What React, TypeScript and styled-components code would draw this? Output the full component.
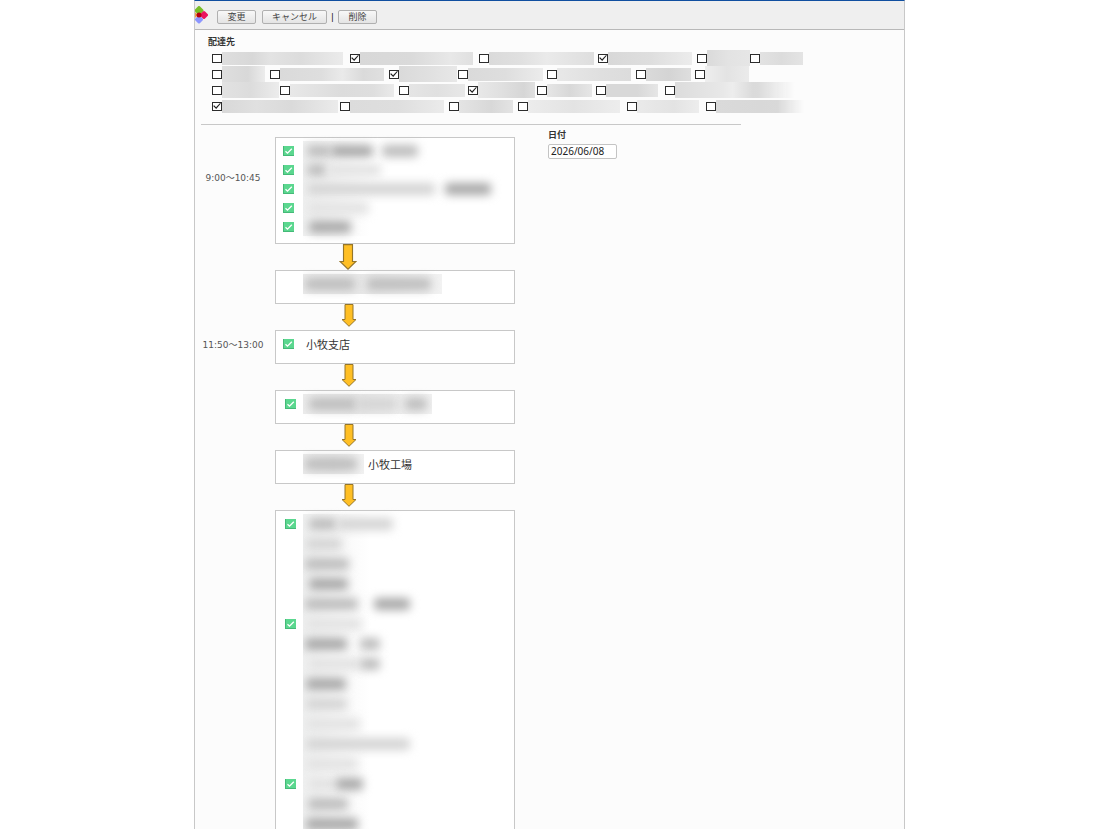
import React from "react";
import styled, { createGlobalStyle } from "styled-components";

const Global = createGlobalStyle`
  * { box-sizing: border-box; }
  body {
    margin: 0;
    background: #fff;
    color: #222;
    font-family: "Noto Sans", "Noto Sans CJK JP", sans-serif;
    font-size: 9px;
  }
`;

const Shell = styled.div`
  display: grid;
  grid-template-columns: minmax(0, 194fr) minmax(0, 711fr) minmax(0, 195fr);
  height: 100vh;
  overflow: hidden;
`;

const Page = styled.div`
  grid-column: 2;
  border: 1px solid #c8c8c8;
  border-top-color: #104fa0;
  border-bottom: 0;
  background: #fcfcfc;
`;

const Toolbar = styled.header`
  display: flex;
  align-items: center;
  height: 29px;
  padding-top: 4px;
  background: #efefef;
  border-bottom: 1px solid #b8b8b8;
`;

const Logo = styled.svg`
  display: block;
  width: 13px;
  height: 18px;
  margin: 0 9px 4px 0;
`;

const Button = styled.button<{ $wide?: boolean }>`
  width: ${(p) => (p.$wide ? 65 : 39)}px;
  height: 14px;
  padding: 0;
  border: 1px solid #b0b0b0;
  border-radius: 2px;
  background: linear-gradient(#f8f8f8, #e4e4e4);
  color: #444;
  font: 9px/10px "Noto Sans CJK JP", sans-serif;
  & + & { margin-left: 6px; }
`;

const Divider = styled.span`
  width: 11px;
  text-align: center;
  font: 9px/12px "Liberation Sans", sans-serif;
  color: #111;
`;

const Destinations = styled.fieldset`
  margin: 0;
  padding: 6px 0 0 17px;
  border: 0;
  min-width: 0;
`;

const Heading = styled.div`
  font: bold 9px/12px "Noto Sans CJK JP", sans-serif;
  color: #333;
`;

const DestinationHeading = styled(Heading)`
  margin: 0 0 2px -4px;
`;

const DestinationRow = styled.div`
  display: flex;
  align-items: center;
  height: 16px;
`;

const Destination = styled.label<{ $pitch: number }>`
  display: flex;
  flex: none;
  align-items: center;
  width: ${(p) => p.$pitch}px;
  height: 16px;
`;

const Tick = styled.input`
  appearance: none;
  flex: none;
  width: 10px;
  height: 9px;
  margin: 0;
  border: 1px solid #2c2c2c;
  background: #fff;
  &:checked::after {
    content: "";
    display: block;
    width: 8px;
    height: 7px;
    background: #222;
    clip-path: polygon(2% 50%, 14% 40%, 38% 68%, 88% 6%, 98% 16%, 40% 92%);
  }
`;

const Mask = styled.span<{ $w: number; $tones: string; $tall?: boolean; $fade?: boolean }>`
  flex: none;
  width: ${(p) => p.$w}px;
  height: ${(p) => (p.$tall ? 16 : 13)}px;
  background: linear-gradient(90deg, ${(p) => p.$tones});
  mask-image: ${(p) => (p.$fade ? "linear-gradient(90deg, #000 70%, transparent)" : "none")};
`;

const Rule = styled.hr`
  max-width: 540px;
  height: 1px;
  margin: 10px 0 0 6px;
  border: 0;
  background: #c8c8c8;
`;

const Body = styled.main`
  display: flex;
  align-items: flex-start;
`;

const Route = styled.div`
  padding-top: 12px;
`;

const Stop = styled.section`
  display: grid;
  grid-template-columns: 76px 240px;
  column-gap: 4px;
  align-items: start;
`;

const Time = styled.div<{ $top: number }>`
  padding-top: ${(p) => p.$top}px;
  text-align: center;
  white-space: nowrap;
  color: #555;
  font: 9px/20px "DejaVu Sans", "Noto Sans CJK JP", sans-serif;
`;

const Card = styled.div<{ $min: number }>`
  grid-column: 2;
  min-height: ${(p) => p.$min}px;
  padding-top: 3px;
  border: 1px solid #c8c8c8;
  background: #fff;
`;

const Line = styled.div<{ $h: number; $inset: number }>`
  display: grid;
  grid-template-columns: 27px 1fr;
  align-items: center;
  height: ${(p) => p.$h}px;
  > svg { margin-left: ${(p) => p.$inset}px; }
`;

const Content = styled.div<{ $w?: number; $tint: string }>`
  grid-column: 2;
  display: flex;
  align-items: center;
  width: ${(p) => (p.$w ? p.$w + "px" : "auto")};
  height: 100%;
  overflow-x: clip;
  background: ${(p) => p.$tint};
`;

const Smudge = styled.span<{ $w: number; $gap?: number; $tone: string }>`
  flex: none;
  width: ${(p) => p.$w}px;
  height: 12px;
  margin-left: ${(p) => p.$gap ?? 0}px;
  border-radius: 4px;
  background: ${(p) => p.$tone};
  filter: blur(5px);
`;

const Name = styled.span`
  padding-left: 3px;
  font: 11px/20px "Noto Sans CJK JP", sans-serif;
  color: #333;
`;

const NamedContent = styled.div`
  display: flex;
  gap: 1px;
  height: 100%;
`;

const ArrowSlot = styled.div<{ $large?: boolean }>`
  height: 26px;
  padding-left: ${(p) => (p.$large ? 144 : 146)}px;
  > svg { display: block; }
`;

const DateField = styled.label`
  display: block;
  margin-left: 33px;
  padding-top: 3px;
`;

const DateInput = styled.input`
  display: block;
  width: 69px;
  height: 15px;
  margin-top: 3px;
  padding: 0 2px 2px;
  border: 1px solid #c4c4c4;
  border-radius: 2px;
  background: #fff;
  color: #222;
  font: 10px/11px "Noto Sans", sans-serif;
`;

type Choice = { pitch: number; w: number; tones: string; on?: boolean; tall?: boolean; fade?: boolean };

const choices: Choice[][] = [
  [
    { pitch: 138, w: 121, tones: "#dedede, #d8d8d8 25%, #e3e3e3 40%, #dcdcdc 65%, #ebebeb" },
    { pitch: 129, w: 113, tones: "#d8d8d8, #dadada 45%, #e8e8e8 80%, #e0e0e0", on: true },
    { pitch: 119, w: 105, tones: "#dadada, #e0e0e0 30%, #eaeaea 55%, #dedede" },
    { pitch: 99, w: 84, tones: "#d8d8d8, #dedede 50%, #ececec", on: true },
    { pitch: 53, w: 43, tones: "#dadada, #e3e3e3 50%, #e6e6e6", tall: true },
    { pitch: 53, w: 43, tones: "#e2e2e2, #dcdcdc 50%, #e4e4e4" },
  ],
  [
    { pitch: 58, w: 43, tones: "#dedede, #d8d8d8 60%, #ececec", tall: true },
    { pitch: 119, w: 104, tones: "#dadada, #dedede 40%, #eaeaea 60%, #dadada 80%, #e0e0e0" },
    { pitch: 69, w: 58, tones: "#dadada, #e0e0e0 50%, #e8e8e8", on: true, tall: true },
    { pitch: 89, w: 75, tones: "#dadada, #dedede 50%, #ececec" },
    { pitch: 89, w: 74, tones: "#e8e8e8, #dfdfdf 60%, #dcdcdc" },
    { pitch: 59, w: 45, tones: "#dadada, #d4d4d4 50%, #dedede" },
    { pitch: 55, w: 44, tones: "#eeeeee, #e3e3e3 50%, #ebebeb", tall: true },
  ],
  [
    { pitch: 68, w: 57, tones: "#e2e2e2, #dcdcdc 50%, #ececec", tall: true },
    { pitch: 119, w: 104, tones: "#e8e8e8, #dcdcdc 50%, #dedede 80%, #eaeaea" },
    { pitch: 69, w: 56, tones: "#e5e5e5, #e0e0e0 50%, #e8e8e8" },
    { pitch: 69, w: 57, tones: "#e8e8e8, #e0e0e0 40%, #d6d6d6 80%, #e0e0e0", on: true, tall: true },
    { pitch: 59, w: 45, tones: "#e6e6e6, #d8d8d8 50%, #e6e6e6" },
    { pitch: 69, w: 52, tones: "#d8d8d8, #d8d8d8 60%, #e6e6e6" },
    { pitch: 130, w: 120, tones: "#dcdcdc, #e8e8e8 40%, #ededed 48%, #dadada 65%, #e0e0e0", tall: true, fade: true },
  ],
  [
    { pitch: 128, w: 116, tones: "#d8d8d8, #e0e0e0 30%, #dadada 60%, #ebebeb", on: true },
    { pitch: 109, w: 94, tones: "#dcdcdc, #dedede 50%, #ebebeb" },
    { pitch: 69, w: 54, tones: "#e4e4e4, #d8d8d8 60%, #e4e4e4" },
    { pitch: 109, w: 92, tones: "#ececec, #e3e3e3 50%, #ededed" },
    { pitch: 79, w: 62, tones: "#eaeaea, #e3e3e3 60%, #ededed" },
    { pitch: 98, w: 88, tones: "#dadada, #d8d8d8 50%, #dadada", fade: true },
  ],
];

type Blob = [width: number, tone: string, gap?: number];
type Entry = { check?: boolean; blobs: Blob[] };

const DARK = "#a8a8a8";
const MID = "#bcbcbc";
const LIGHT = "#d4d4d4";
const FAINT = "#e2e2e2";

const morning: Entry[] = [
  { check: true, blobs: [[24, MID, 4], [42, DARK], [36, MID, 9]] },
  { check: true, blobs: [[20, MID, 4], [54, FAINT]] },
  { check: true, blobs: [[128, LIGHT, 4], [46, DARK, 10]] },
  { check: true, blobs: [[62, FAINT, 4]] },
  { check: true, blobs: [[42, DARK, 6]] },
];

const afternoon: Entry[] = [
  { check: true, blobs: [[28, MID, 6], [56, LIGHT]] },
  { blobs: [[36, LIGHT, 3]] },
  { blobs: [[44, MID, 2]] },
  { blobs: [[39, DARK, 6]] },
  { blobs: [[53, MID, 2], [36, DARK, 16]] },
  { check: true, blobs: [[56, FAINT, 3]] },
  { blobs: [[42, DARK, 2], [20, MID, 13]] },
  { blobs: [[52, FAINT, 5], [20, MID]] },
  { blobs: [[40, DARK, 3]] },
  { blobs: [[41, LIGHT, 3]] },
  { blobs: [[54, FAINT, 3]] },
  { blobs: [[104, LIGHT, 3]] },
  { blobs: [[52, FAINT, 3]] },
  { check: true, blobs: [[28, FAINT, 5], [27, DARK]] },
  { blobs: [[40, MID, 5]] },
  { blobs: [[52, DARK, 3]] },
  { blobs: [[46, MID, 3]] },
];

const WASH = "linear-gradient(90deg, #f0f1f1, #f5f5f5 10%, #fff 32%)";
const PLATE = "linear-gradient(90deg, #ececec, #e8e8e8 50%, #f2f2f2)";

const Check = () => (
  <svg width="11" height="10" viewBox="0 0 11 10" role="img" aria-label="完了">
    <rect width="11" height="10" fill="#45b978" />
    <rect x="1" width="10" height="9" fill="#5bd78f" />
    <path d="M2.5 5.2 4.5 7.2 8.8 2.8" fill="none" stroke="#fff" strokeWidth="1.3" />
  </svg>
);

const Arrow = ({ large }: { large?: boolean }) => (
  <ArrowSlot $large={large}>
    <svg
      width={large ? 18 : 16}
      height={large ? 26 : 23}
      viewBox="0 0 16 23"
      preserveAspectRatio="none"
      aria-hidden="true"
    >
      <path d="M4 .5H12V15.500H15L8 22.300 1 15.500H4Z" fill="#ffbf24" stroke="#94752a" strokeWidth="1" />
    </svg>
  </ArrowSlot>
);

const Blobs = ({ items }: { items: Blob[] }) => (
  <>
    {items.map(([w, tone, gap], i) => (
      <Smudge key={i} $w={w} $tone={tone} $gap={gap} />
    ))}
  </>
);

const EntryLine = ({ entry, height, inset }: { entry: Entry; height: number; inset: number }) => (
  <Line $h={height} $inset={inset}>
    {entry.check && <Check />}
    <Content $tint={WASH}>
      <Blobs items={entry.blobs} />
    </Content>
  </Line>
);

export default function App() {
  return (
    <>
      <Global />
      <Shell lang="ja">
        <Page>
          <Toolbar>
            <Logo viewBox="0 0 13 18" aria-hidden="true">
              <path d="M4 1.500 7 4.500 4 7.500 1 4.500Z" fill="#78be28" stroke="#78be28" strokeWidth="3" strokeLinejoin="round" />
              <path d="M4 11 6.500 13.500 4 16 1.500 13.500Z" fill="#8c96ff" stroke="#8c96ff" strokeWidth="3" strokeLinejoin="round" />
              <path d="M-1 6.500 1.500 9-1 11.500Z" fill="#f0a050" stroke="#f0a050" strokeWidth="2" strokeLinejoin="round" />
              <path d="M9 6.500 11.500 9 9 11.500 6.500 9Z" fill="#eb1460" stroke="#eb1460" strokeWidth="3" strokeLinejoin="round" />
              <circle cx="4" cy="9" r="2.500" fill="#b80010" />
            </Logo>
            <Button type="button">変更</Button>
            <Button type="button" $wide>キャンセル</Button>
            <Divider>|</Divider>
            <Button type="button">削除</Button>
          </Toolbar>

          <Destinations aria-labelledby="destinations">
            <DestinationHeading id="destinations">配達先</DestinationHeading>
            {choices.map((row, r) => (
              <DestinationRow key={r}>
                {row.map((c, i) => (
                  <Destination key={i} $pitch={c.pitch}>
                    <Tick type="checkbox" defaultChecked={c.on} aria-label={`配達先 ${r + 1}-${i + 1}`} />
                    <Mask $w={c.w} $tones={c.tones} $tall={c.tall} $fade={c.fade} />
                  </Destination>
                ))}
              </DestinationRow>
            ))}
          </Destinations>

          <Rule />

          <Body>
            <Route>
              <Stop>
                <Time $top={31}>9:00～10:45</Time>
                <Card $min={107}>
                  {morning.map((e, i) => (
                    <EntryLine key={i} entry={e} height={19} inset={7} />
                  ))}
                </Card>
              </Stop>
              <Arrow large />
              <Stop>
                <Card $min={34}>
                  <Line $h={20} $inset={7}>
                    <Content $w={139} $tint={PLATE}>
                      <Blobs items={[[50, MID, 2], [64, MID, 12]]} />
                    </Content>
                  </Line>
                </Card>
              </Stop>
              <Arrow />
              <Stop>
                <Time $top={5}>11:50～13:00</Time>
                <Card $min={34}>
                  <Line $h={20} $inset={7}>
                    <Check />
                    <Name>小牧支店</Name>
                  </Line>
                </Card>
              </Stop>
              <Arrow />
              <Stop>
                <Card $min={34}>
                  <Line $h={20} $inset={9}>
                    <Check />
                    <Content $w={129} $tint={PLATE}>
                      <Blobs items={[[48, MID, 6], [40, LIGHT], [22, MID, 8]]} />
                    </Content>
                  </Line>
                </Card>
              </Stop>
              <Arrow />
              <Stop>
                <Card $min={34}>
                  <Line $h={20} $inset={9}>
                    <span />
                    <NamedContent>
                      <Content $w={61} $tint={PLATE}>
                        <Blobs items={[[52, MID, 2]]} />
                      </Content>
                      <Name>小牧工場</Name>
                    </NamedContent>
                  </Line>
                </Card>
              </Stop>
              <Arrow />
              <Stop>
                <Card $min={34}>
                  {afternoon.map((e, i) => (
                    <EntryLine key={i} entry={e} height={20} inset={9} />
                  ))}
                </Card>
              </Stop>
            </Route>

            <DateField>
              <Heading as="span">日付</Heading>
              <DateInput type="text" defaultValue="2026/06/08" />
            </DateField>
          </Body>
        </Page>
      </Shell>
    </>
  );
}
